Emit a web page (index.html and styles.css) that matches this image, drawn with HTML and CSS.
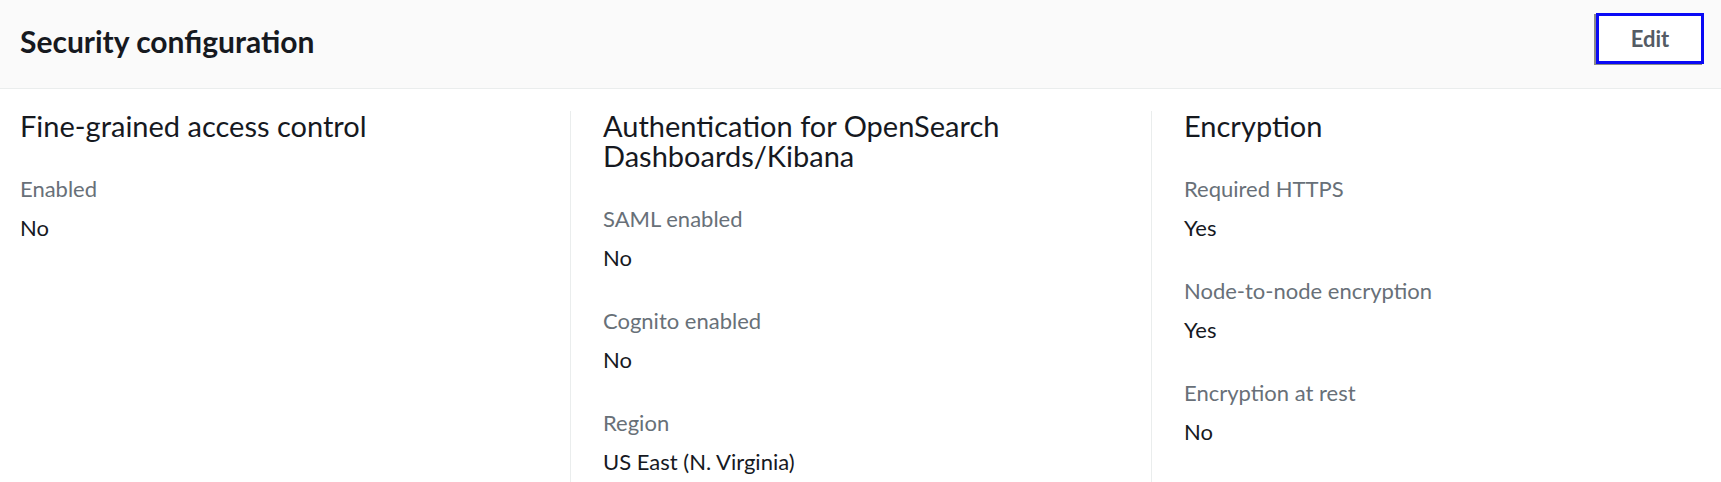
FILE: index.html
```html
<!DOCTYPE html>
<html lang="en">
<head>
<meta charset="utf-8">
<title>Security configuration</title>
<link rel="stylesheet" href="styles.css">
</head>
<body>
<section class="panel">
  <header class="panel-header">
    <h2 class="panel-title">Security configuration</h2>
    <button class="btn" type="button">Edit</button>
  </header>
  <div class="columns">
    <div class="col">
      <h3 class="col-title"><span class="line">Fine-grained access control</span></h3>
      <div class="pair">
        <div class="label">Enabled</div>
        <div class="value">No</div>
      </div>
    </div>
    <div class="col">
      <h3 class="col-title"><span class="line">Authentication for OpenSearch</span><span class="line">Dashboards/Kibana</span></h3>
      <div class="pair">
        <div class="label">SAML enabled</div>
        <div class="value">No</div>
      </div>
      <div class="pair">
        <div class="label">Cognito enabled</div>
        <div class="value">No</div>
      </div>
      <div class="pair">
        <div class="label">Region</div>
        <div class="value">US East (N. Virginia)</div>
      </div>
    </div>
    <div class="col">
      <h3 class="col-title"><span class="line">Encryption</span></h3>
      <div class="pair">
        <div class="label">Required HTTPS</div>
        <div class="value">Yes</div>
      </div>
      <div class="pair">
        <div class="label">Node-to-node encryption</div>
        <div class="value">Yes</div>
      </div>
      <div class="pair">
        <div class="label">Encryption at rest</div>
        <div class="value">No</div>
      </div>
    </div>
  </div>
</section>
</body>
</html>
```

FILE: styles.css
```css
* { box-sizing: border-box; }

html, body {
  margin: 0;
  padding: 0;
  background: #ffffff;
  overflow: hidden;
}

body {
  font-family: Lato, "Open Sans", sans-serif;
  color: #16191f;
}

.panel {
  width: 100%;
}

.panel-header {
  display: flex;
  justify-content: space-between;
  align-items: flex-start;
  height: 89px;
  padding: 0 17px 0 20px;
  background: #fafafa;
  border-bottom: 1px solid #eaeded;
}

.panel-title {
  margin: 23px 0 0 0;
  font-size: 30px;
  line-height: 36px;
  font-weight: 700;
  color: #16191f;
}

.btn {
  margin-top: 13px;
  width: 108px;
  height: 51px;
  padding: 0;
  background: #ffffff;
  border: 3px solid #0a0af5;
  box-shadow: -2px 1px 0 0 #8a8a8a;
  font-family: Lato, "Open Sans", sans-serif;
  font-size: 22px;
  font-weight: 700;
  color: #545b64;
  cursor: pointer;
}

.columns {
  display: grid;
  grid-template-columns: 1fr 1fr 1fr;
  margin: 0 -11px;
  padding-top: 22px;
}

.col {
  padding: 0 20px 0 31px;
  min-height: 371px;
}

.col + .col {
  border-left: 1px solid #eaeded;
  padding-left: 32px;
}

.col-title {
  display: flex;
  flex-direction: column;
  margin: 0 0 25px 0;
  font-size: 29px;
  line-height: 30px;
  font-weight: 400;
  color: #16191f;
}

.line {
  display: block;
  height: 30px;
}

.pair {
  display: flex;
  flex-direction: column;
  gap: 9px;
  padding-top: 8px;
  margin-bottom: 25px;
}

.pair:last-child {
  margin-bottom: 0;
}

.label {
  font-size: 22px;
  line-height: 30px;
  color: #687078;
}

.value {
  font-size: 22px;
  line-height: 30px;
  color: #16191f;
}
```
